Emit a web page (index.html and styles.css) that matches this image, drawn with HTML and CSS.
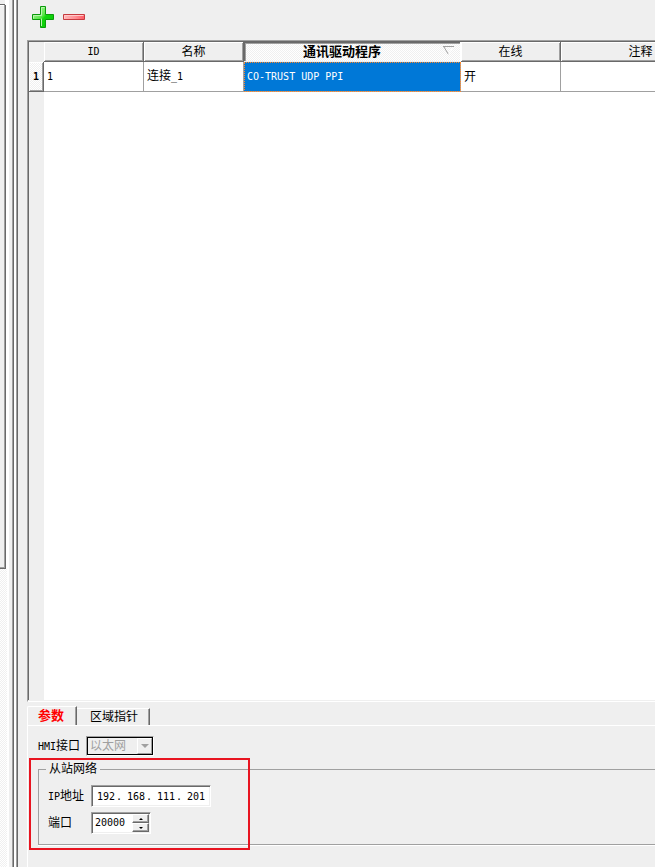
FILE: index.html
```html
<!DOCTYPE html>
<html lang="zh-CN">
<head>
  <meta charset="UTF-8">
  <meta name="viewport" content="width=device-width, initial-scale=1.0">
  <title>连接</title>
  <link rel="stylesheet" href="styles.css">
</head>
<body>

<div class="window">
  <!-- Left dock -->
  <div class="dock">
    <div class="dock-title"></div>
    <div class="dock-panel"></div>
    <div class="dock-rest"></div>
  </div>
  <div class="splitter"></div>
  <div class="splitter-edge"></div>

  <main class="content">
    <div class="toolbar">
      <button type="button" class="tool" aria-label="添加">
        <svg width="23" height="24" viewBox="0 0 23 24">
          <defs>
            <linearGradient id="green" x1="0" y1="0" x2="1" y2="1">
              <stop offset="0" stop-color="#c4f7b4"/>
              <stop offset="0.45" stop-color="#5be84a"/>
              <stop offset="0.55" stop-color="#12d60c"/>
              <stop offset="1" stop-color="#05c405"/>
            </linearGradient>
          </defs>
          <path d="M8.500 1.500h5v8h8v5h-8v8h-5v-8h-8v-5h8z" fill="url(#green)" stroke="#0a9a0a"/>
          <path d="M9.500 21v-7.500M1.500 13.500v-3h8v-8h3" fill="none" stroke="#b9f5ae"/>
        </svg>
      </button>
      <button type="button" class="tool" aria-label="删除">
        <svg width="23" height="24" viewBox="0 0 23 24">
          <defs>
            <linearGradient id="red" x1="0" y1="0" x2="1" y2="0">
              <stop offset="0" stop-color="#ffb9b9"/>
              <stop offset="0.55" stop-color="#ff8f94"/>
              <stop offset="1" stop-color="#ff5a64"/>
            </linearGradient>
          </defs>
          <path d="M0.500 9.500h21v5h-21z" fill="url(#red)" stroke="#c63a3e"/>
          <path d="M1.500 13.500v-3h19" fill="none" stroke="#ffc9c9"/>
        </svg>
      </button>
    </div>

    <div class="table-frame">
      <table class="grid">
        <colgroup>
          <col class="col-index">
          <col class="col-std">
          <col class="col-std">
          <col class="col-driver">
          <col class="col-std">
          <col class="col-note">
        </colgroup>
        <thead>
          <tr>
            <th class="corner"></th>
            <th><span class="latin">ID</span></th>
            <th>名称</th>
            <th class="pressed">通讯驱动程序
              <svg class="sort" width="11" height="9" viewBox="0 0 11 9">
                <path d="M0 0.500h11" stroke="#a0a0a0"/>
                <path d="M1 1l4.500 7.500" stroke="#a0a0a0" fill="none"/>
                <path d="M10 1l-4.500 7.500" stroke="#fff" fill="none"/>
              </svg>
            </th>
            <th>在线</th>
            <th>注释</th>
          </tr>
        </thead>
        <tbody>
          <tr>
            <th class="row-head" scope="row"><span class="latin">1</span></th>
            <td><span class="latin">1</span></td>
            <td>连接<span class="latin">_1</span></td>
            <td class="selected"><span class="latin">CO-TRUST UDP PPI</span></td>
            <td>开</td>
            <td></td>
          </tr>
        </tbody>
      </table>
    </div>

    <!-- Connection settings -->
    <div class="tabs" role="tablist">
      <button type="button" class="tab active" role="tab" aria-selected="true">参数</button>
      <button type="button" class="tab" role="tab" aria-selected="false">区域指针</button>
    </div>

    <div class="page">
      <div class="row hmi">
        <label for="hmi"><span class="latin">HMI</span>接口</label>
        <div class="combo">
          <select id="hmi" disabled>
            <option>以太网</option>
          </select>
          <span class="combo-btn"><i class="arrow down grey"></i></span>
        </div>
      </div>

      <fieldset class="group">
        <legend>从站网络</legend>
        <div class="row">
          <label class="name" for="ip1"><span class="latin">IP</span>地址</label>
          <div class="ip">
            <input id="ip1" type="text" value="192" maxlength="3"><span>.</span>
            <input type="text" value="168" maxlength="3" aria-label="IP 2"><span>.</span>
            <input type="text" value="111" maxlength="3" aria-label="IP 3"><span>.</span>
            <input type="text" value="201" maxlength="3" aria-label="IP 4">
          </div>
        </div>
        <div class="row">
          <label class="name" for="port">端口</label>
          <div class="spin">
            <input id="port" type="text" value="20000">
            <div class="spin-btns">
              <button type="button" aria-label="增加"><i class="arrow up"></i></button>
              <button type="button" aria-label="减少"><i class="arrow down"></i></button>
            </div>
          </div>
        </div>
        <div class="highlight"></div>
      </fieldset>
    </div>
  </main>
</div>

</body>
</html>
```

FILE: styles.css
```css
* { box-sizing: border-box; }

:root {
  --face: #efefef;
  --shadow: #a0a0a0;
  --dark: #696969;
  --dither: repeating-conic-gradient(#fff 0 25%, #f0f0f0 0 50%) 0 0 / 2px 2px;
}

body {
  margin: 0;
  background: var(--face);
  color: #000;
  font: 12px/16px "Liberation Sans", "Noto Sans CJK SC", sans-serif;
  overflow: hidden;
}

button, input, select {
  font: inherit;
  color: inherit;
  margin: 0;
  padding: 0;
  border: none;
  border-radius: 0;
  background: none;
}

.latin {
  font-family: "DejaVu Sans Mono", monospace;
  font-size: 10px;
}

.window {
  display: flex;
  height: 100vh;
}

/* Left dock */
.dock {
  flex: none;
  width: 9px;
  display: flex;
  flex-direction: column;
  background: #fff;
}

.dock-title {
  height: 5px;
  width: 5px;
  background: var(--face);
  border-bottom: 1px solid var(--dark);
}

.dock-panel {
  flex: 564;
  width: 6px;
  background: var(--face);
  border: solid var(--dark);
  border-width: 0 1px 1px 0;
  box-shadow: inset -1px -1px var(--shadow), inset 0 1px #fff;
}

.dock-rest {
  flex: 298;
  width: 7px;
  background: var(--dither);
}

.splitter {
  flex: none;
  width: 5px;
  border-right: 1px solid var(--dark);
  box-shadow: inset -1px 0 var(--shadow);
}

.splitter-edge {
  flex: none;
  width: 4px;
  background: #fff;
  border-right: 1px solid var(--dark);
  box-shadow: inset -1px 0 var(--shadow);
}

.content {
  flex: 1;
  min-width: 0;
  display: flex;
  flex-direction: column;
  padding-left: 9px;
}

.toolbar {
  display: flex;
  gap: 8px;
  height: 40px;
  padding: 5px;
}

.tool {
  width: 23px;
  height: 24px;
}

.tool svg { display: block; }

/* Table */
.table-frame {
  flex: 1;
  min-height: 0;
  overflow: hidden;
  border: solid var(--shadow);
  border-width: 1px 0 0 1px;
  border-bottom: 1px solid #fff;
  background: linear-gradient(to right, var(--dark) 1px, var(--face) 1px 16px, #fff 16px);
  box-shadow: inset 0 1px var(--dark), inset 0 -1px var(--face);
  padding: 1px 0 0 1px;
}

.grid {
  table-layout: fixed;
  border-collapse: separate;
  border-spacing: 0;
  width: 692px;
}

.col-index { width: 15px; }
.col-std { width: 100px; }
.col-driver { width: 217px; }
.col-note { width: 160px; }

.grid th {
  height: 20px;
  padding: 0;
  font-weight: normal;
  line-height: 16px;
  background: var(--face);
  border: solid var(--dark);
  border-width: 0 1px 1px 0;
  box-shadow: inset 1px 1px #fff, inset -1px -1px var(--shadow);
}

.grid th.corner {
  border-right: none;
  border-bottom-color: var(--face);
  box-shadow: none;
}

.grid th.pressed {
  position: relative;
  font-size: 13px;
  font-weight: bold;
  background: var(--dither);
  border-color: #fff;
  border-bottom-color: var(--face);
  box-shadow: inset 1px 1px var(--dark), inset 2px 2px var(--shadow);
  padding-right: 20px;
}

.sort {
  position: absolute;
  right: 6px;
  top: 4px;
}

.grid th.row-head {
  font-weight: bold;
  background: var(--dither);
}

.grid td {
  height: 30px;
  padding: 0 3px;
  background: #fff;
  border: solid var(--shadow);
  border-width: 0 1px 1px 0;
}

.grid td.selected {
  background: #0078d7;
  color: #fff;
  outline: 1px dotted #ff8728;
  outline-offset: -1px;
}

/* Tabs */
.tabs {
  display: flex;
  align-items: flex-end;
  height: 23px;
  padding-top: 4px;
}

.tab {
  height: 17px;
  padding: 0 11px 0 13px;
  border: solid #fff;
  border-width: 1px 0 0 0;
  border-right: 1px solid var(--dark);
  box-shadow: inset -1px 0 var(--shadow);
}

.tab.active {
  height: 19px;
  padding: 0 12px 0 10px;
  border-left: 1px solid #fff;
  border-radius: 2px 0 0 0;
  font-size: 13px;
  font-weight: bold;
  color: #f00;
}

.page {
  border: solid #fff;
  border-width: 1px 0 0 1px;
  padding: 10px 0 22px 10px;
}

.row {
  display: flex;
  align-items: center;
}

.hmi {
  gap: 6px;
  height: 20px;
}

.combo {
  display: flex;
  position: relative;
  width: 68px;
  height: 20px;
  border: 1px solid var(--shadow);
  border-right-color: #fff;
  border-bottom-color: #fff;
  box-shadow: inset 0 0 0 1px #000;
}

.combo select {
  appearance: none;
  width: 100%;
  padding-left: 3px;
  color: var(--shadow);
  opacity: 1;
}

/* Drawn over the select, in place of the native arrow */
.combo-btn {
  position: absolute;
  right: 1px;
  top: 1px;
  bottom: 1px;
  width: 15px;
  display: flex;
  align-items: center;
  justify-content: center;
  background: var(--face);
  border: 1px solid #fff;
  border-right-color: var(--shadow);
  border-bottom-color: var(--shadow);
  pointer-events: none;
}

.arrow {
  border: solid transparent;
  border-width: 0 2px;
}

.arrow.up { border-bottom: 2px solid #000; }
.arrow.down { border-top: 2px solid #000; }

.arrow.grey {
  border-width: 4px 4px 0;
  border-top-color: var(--shadow);
}

.group {
  position: relative;
  margin: 5px 0 0;
  padding: 8px 0 10px 9px;
  min-width: 0;
  border: 1px solid var(--shadow);
  border-right: none;
  box-shadow: 0 1px #fff;
  display: flex;
  flex-direction: column;
  gap: 5px;
}

.group legend {
  margin-left: -2px;
  padding: 0 3px;
}

.name { width: 43px; }

.ip, .spin {
  display: flex;
  height: 22px;
  background: #fff;
  border: 1px solid var(--shadow);
  border-right-color: #fff;
  border-bottom-color: #fff;
  box-shadow: inset 1px 1px var(--dark), inset -1px -1px var(--face);
  font: 10px/20px "DejaVu Sans Mono", monospace;
}

.ip {
  width: 120px;
  padding: 1px 0 0 5px;
}

.ip input {
  width: 19px;
  height: 20px;
}

.ip span { width: 11px; }

.spin {
  width: 60px;
  padding: 1px 1px 1px 3px;
}

.spin input {
  flex: 1;
  min-width: 0;
}

.spin-btns {
  display: flex;
  flex-direction: column;
  width: 17px;
}

.spin-btns button {
  flex: 1;
  display: flex;
  align-items: center;
  justify-content: center;
  background: var(--face);
  border: 1px solid #fff;
  border-right-color: var(--dark);
  border-bottom-color: var(--dark);
  box-shadow: inset -1px -1px var(--shadow);
}

/* Red frame over the slave network settings */
.highlight {
  position: absolute;
  left: -10px;
  top: -19px;
  bottom: -6px;
  width: 221px;
  border: 2px solid #e81420;
  pointer-events: none;
}
```
